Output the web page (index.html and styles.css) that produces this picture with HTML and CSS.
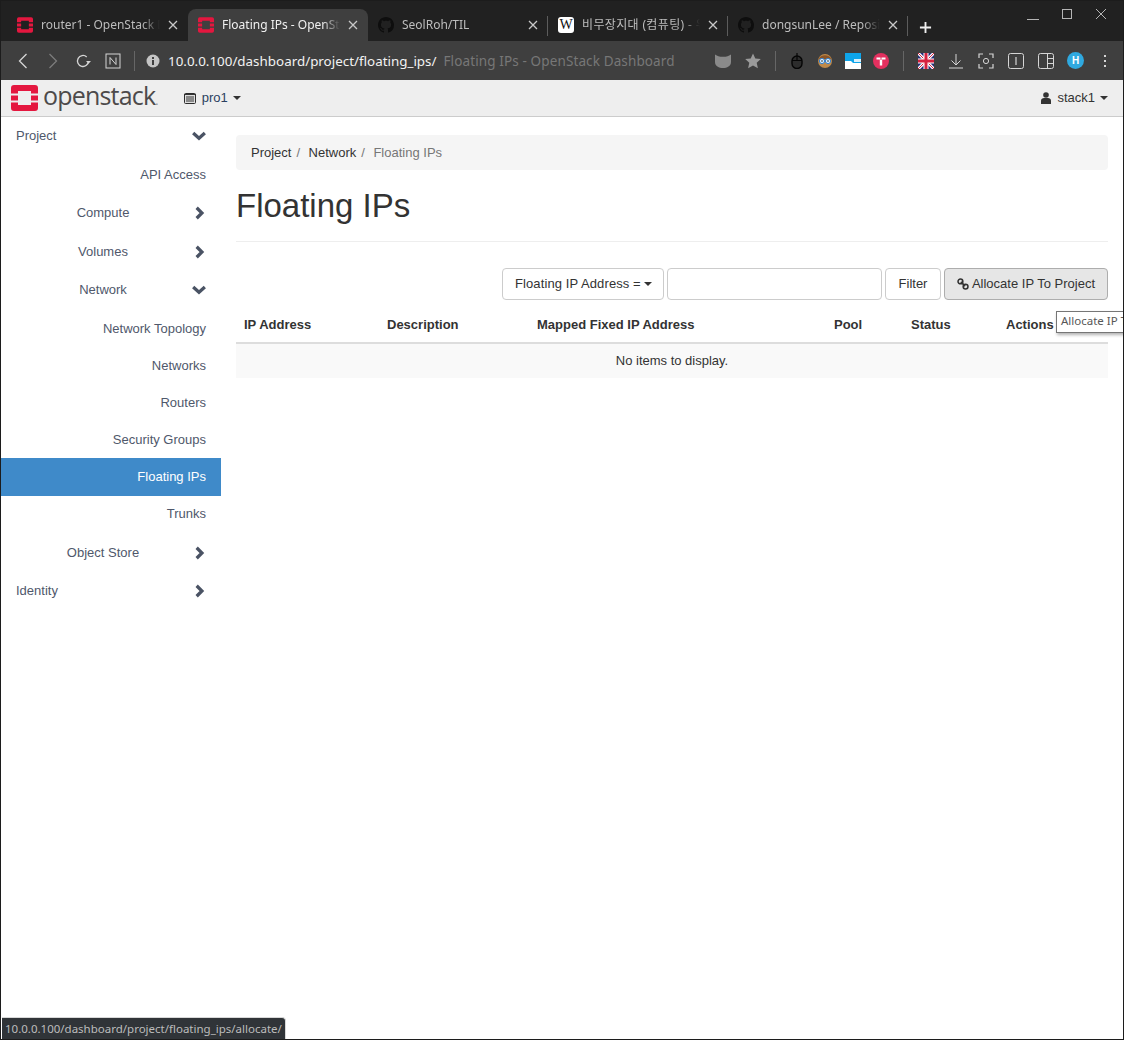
FILE: index.html
```html
<!DOCTYPE html>
<html lang="en">

<head>
    <meta charset="UTF-8" />
    <meta name="viewport" content="width=device-width, initial-scale=1.0" />
    <title>Floating IPs - OpenStack Dashboard</title>
    <link rel="stylesheet" href="styles.css">
</head>

<body>
    <svg class="defs" xmlns="http://www.w3.org/2000/svg">
        <symbol id="os-logo" viewBox="0 0 27 26">
            <path fill="#e4173f" d="M3 0h21a3 3 0 0 1 3 3v5.500h-7V6H7v2.500H0V3a3 3 0 0 1 3-3z" />
            <path fill="#e4173f" d="M0 10.500h7v5H0zM20 10.500h7v5h-7z" />
            <path fill="#e4173f" d="M0 17.500h7V20h13v-2.500h7V23a3 3 0 0 1-3 3H3a3 3 0 0 1-3-3z" />
        </symbol>
        <symbol id="gh-logo" viewBox="0 0 16 16">
            <path fill="#0e0e0e" d="M8 0C3.58 0 0 3.58 0 8c0 3.54 2.29 6.53 5.47 7.59.4.07.55-.17.55-.38 0-.19-.01-.82-.01-1.49-2.01.37-2.53-.49-2.69-.94-.09-.23-.48-.94-.82-1.13-.28-.15-.68-.52-.01-.53.63-.01 1.08.58 1.23.82.72 1.21 1.87.87 2.33.66.07-.52.28-.87.51-1.07-1.78-.2-3.64-.89-3.64-3.95 0-.87.31-1.59.82-2.15-.08-.2-.36-1.02.08-2.12 0 0 .67-.21 2.2.82.64-.18 1.32-.27 2-.27.68 0 1.36.09 2 .27 1.53-1.04 2.2-.82 2.2-.82.44 1.1.16 1.92.08 2.12.51.56.82 1.27.82 2.15 0 3.07-1.87 3.75-3.65 3.95.29.25.54.73.54 1.48 0 1.07-.01 1.93-.01 2.2 0 .21.15.46.55.38A8.013 8.013 0 0 0 16 8c0-4.42-3.58-8-8-8z" />
        </symbol>
        <symbol id="close-x" viewBox="0 0 10 10">
            <path d="M1 1l8 8M9 1l-8 8" stroke="#c8c8c8" stroke-width="1.300" fill="none" />
        </symbol>
        <symbol id="chev-right" viewBox="0 0 12 12">
            <path d="M4 1.500L8.500 6 4 10.500" stroke="#4a5364" stroke-width="2.800" fill="none" />
        </symbol>
        <symbol id="chev-down" viewBox="0 0 12 12">
            <path d="M1 3.500L6 8l5-4.500" stroke="#4a5364" stroke-width="2.800" fill="none" />
        </symbol>
    </svg>

    <div class="window">
        <div class="tabstrip">
            <div class="tab">
                <svg class="favicon"><use href="#os-logo" /></svg>
                <span class="tab-title">router1 - OpenStack Dashboard</span>
                <svg class="tab-close"><use href="#close-x" /></svg>
            </div>
            <div class="tab active">
                <svg class="favicon"><use href="#os-logo" /></svg>
                <span class="tab-title">Floating IPs - OpenStack Dashboard</span>
                <svg class="tab-close"><use href="#close-x" /></svg>
            </div>
            <div class="tab sep">
                <svg class="favicon"><use href="#gh-logo" /></svg>
                <span class="tab-title">SeolRoh/TIL</span>
                <svg class="tab-close"><use href="#close-x" /></svg>
            </div>
            <div class="tab sep">
                <span class="favicon wiki">W</span>
                <span class="tab-title ko">비무장지대 (컴퓨팅) - 위키백과</span>
                <svg class="tab-close"><use href="#close-x" /></svg>
            </div>
            <div class="tab sep">
                <svg class="favicon"><use href="#gh-logo" /></svg>
                <span class="tab-title">dongsunLee / Repositories</span>
                <svg class="tab-close"><use href="#close-x" /></svg>
            </div>
            <svg class="new-tab" viewBox="0 0 14 14"><path d="M7 1v12M1 7h12" stroke="#f0f0f0" stroke-width="2" /></svg>
            <div class="win-controls">
                <svg viewBox="0 0 14 14"><path d="M1 12.500h12" stroke="#b5b5b5" /></svg>
                <svg viewBox="0 0 14 14"><rect x="2.500" y="2.500" width="9" height="9" fill="none" stroke="#b5b5b5" /></svg>
                <svg viewBox="0 0 14 14"><path d="M2 2l10 10M12 2L2 12" stroke="#b5b5b5" /></svg>
            </div>
        </div>

        <div class="toolbar">
            <span class="tool"><svg viewBox="0 0 16 16"><path d="M11.500 1L4.500 8l7 7" stroke="#d6d6d6" stroke-width="1.300" fill="none" /></svg></span>
            <span class="tool"><svg viewBox="0 0 16 16"><path d="M4.500 1l7 7-7 7" stroke="#7c7c7c" stroke-width="1.300" fill="none" /></svg></span>
            <span class="tool"><svg viewBox="0 0 16 16"><path d="M13.500 8a5.500 5.500 0 1 1-1.800-4.100" stroke="#d6d6d6" stroke-width="1.300" fill="none" /><path d="M11 8h5l-2.500 2.800z" fill="#d6d6d6" /></svg></span>
            <span class="tool"><svg viewBox="0 0 16 16"><rect x="1" y="1" width="14" height="14" fill="none" stroke="#d6d6d6" /><path d="M5 11.500v-7l6 7v-7" stroke="#d6d6d6" fill="none" /></svg></span>
            <span class="bar-sep url-sep"></span>
            <svg class="info" viewBox="0 0 14 14"><circle cx="7" cy="7" r="6.500" fill="#c4c4c4" /><path d="M6 6h2v5H6zM6 3h2v2H6z" fill="#3f3f3f" /></svg>
            <span class="url">10.0.0.100/dashboard/project/floating_ips/</span>
            <span class="page-title">Floating IPs - OpenStack Dashboard</span>
            <div class="tool-right">
                <span class="tool"><svg viewBox="0 0 16 16"><path d="M0 1.500c2.500 1.800 4 2.300 8 2.300s5.500-.5 8-2.300V9c0 4-4 6-8 6s-8-2-8-6z" fill="#8a8a8a" /></svg></span>
                <span class="tool"><svg viewBox="0 0 16 16"><path d="M8 .5l2.300 5 5.500.6-4.100 3.700 1.200 5.400L8 12.400l-4.900 2.800 1.200-5.400L.2 6.100l5.500-.6z" fill="#9a9a9a" /></svg></span>
                <span class="bar-sep sep-a"></span>
                <span class="tool ext"><svg viewBox="0 0 16 16"><rect x="3" y="3" width="10" height="12.500" rx="5" fill="#2c2c2c" stroke="#050505" stroke-width="1.400" /><path d="M8 0v7M3 7.500h10" stroke="#050505" stroke-width="1.200" /></svg></span>
                <span class="tool ext"><svg viewBox="0 0 16 16"><circle cx="8" cy="8" r="7" fill="#c08a4a" /><path d="M2 6c1-5 11-5 12 0z" fill="#8a5527" /><circle cx="5" cy="8" r="2.600" fill="#dff0fb" stroke="#2f7fd0" /><circle cx="11" cy="8" r="2.600" fill="#dff0fb" stroke="#2f7fd0" /><circle cx="5" cy="8" r=".8" fill="#222" /><circle cx="11" cy="8" r=".8" fill="#222" /></svg></span>
                <span class="tool ext"><svg viewBox="0 0 16 16"><rect width="16" height="16" fill="#0ea5ea" /><path d="M0 8h6l2 2h8v6H0z" fill="#fff" /><path d="M9 6h7v3H9z" fill="#d8f0fb" /></svg></span>
                <span class="tool ext"><svg viewBox="0 0 16 16"><circle cx="8" cy="8" r="8" fill="#e3305f" /><path d="M3.500 4.500h9v2h-3.300v6H6.800v-6H3.500z" fill="#fff" /><path d="M8 4v3" stroke="#e3305f" /></svg></span>
                <span class="bar-sep sep-b"></span>
                <span class="tool"><svg viewBox="0 0 16 16"><rect width="16" height="16" rx="1.500" fill="#26307a" /><path d="M0 0l16 16M16 0L0 16" stroke="#fff" stroke-width="3" /><path d="M0 0l16 16M16 0L0 16" stroke="#d5213f" /><path d="M8 0v16M0 8h16" stroke="#fff" stroke-width="5" /><path d="M8 0v16M0 8h16" stroke="#d5213f" stroke-width="3" /></svg></span>
                <span class="tool"><svg viewBox="0 0 16 16"><path d="M8 1v10.500M3.500 7.500L8 12l4.500-4.500M1 15h14" stroke="#d6d6d6" fill="none" /></svg></span>
                <span class="tool"><svg viewBox="0 0 16 16"><path d="M1 5V1h4M11 1h4v4M15 11v4h-4M5 15H1v-4" stroke="#d6d6d6" stroke-width="1.200" fill="none" /><circle cx="8" cy="8" r="2.600" stroke="#d6d6d6" fill="none" /></svg></span>
                <span class="tool"><svg viewBox="0 0 16 16"><rect x=".5" y=".5" width="15" height="15" rx="2" stroke="#d6d6d6" fill="none" /><path d="M8 4v8" stroke="#d6d6d6" stroke-width="1.200" /></svg></span>
                <span class="tool"><svg viewBox="0 0 16 16"><rect x=".5" y=".5" width="15" height="15" rx="2" stroke="#d6d6d6" fill="none" /><path d="M9.500 1v14M9.500 5.500h6M9.500 10.500h6" stroke="#d6d6d6" /></svg></span>
                <span class="tool narrow"><span class="avatar">H</span></span>
                <span class="tool narrow"><svg viewBox="0 0 16 16"><path d="M7 2h2v2H7zM7 7h2v2H7zM7 12h2v2H7z" fill="#d6d6d6" /></svg></span>
            </div>
        </div>

        <div class="topnav">
            <svg class="brand-logo"><use href="#os-logo" /></svg>
            <span class="brand-name">openstack<small>.</small></span>
            <div class="project-picker">
                <svg class="project-icon" viewBox="0 0 12 11"><rect x=".5" y=".5" width="11" height="10" rx="1" fill="#dedede" stroke="#2b2b2b" /><path d="M0 1.500h12M2 4h8M2 6h8M2 8h8" stroke="#333" /></svg>
                <span class="project-name">pro1</span>
                <span class="caret"></span>
            </div>
            <div class="user-menu">
                <svg class="user-icon" viewBox="0 0 10 12"><circle cx="5" cy="3" r="2.800" fill="#333" /><path d="M0 12V8.500C0 7 1.500 6 3 6h4c1.500 0 3 1 3 2.500V12z" fill="#333" /></svg>
                <span>stack1</span>
                <span class="caret"></span>
            </div>
        </div>

        <div class="content">
            <nav class="sidebar">
                <div class="nav-row first top">
                    <span class="nav-label">Project</span>
                    <svg class="chev"><use href="#chev-down" /></svg>
                </div>
                <div class="nav-row leaf">API Access</div>
                <div class="nav-row second">
                    <span class="nav-label">Compute</span>
                    <svg class="chev"><use href="#chev-right" /></svg>
                </div>
                <div class="nav-row second">
                    <span class="nav-label">Volumes</span>
                    <svg class="chev"><use href="#chev-right" /></svg>
                </div>
                <div class="nav-row second">
                    <span class="nav-label">Network</span>
                    <svg class="chev"><use href="#chev-down" /></svg>
                </div>
                <div class="subgroup">
                    <div class="nav-row leaf sub">Network Topology</div>
                    <div class="nav-row leaf sub">Networks</div>
                    <div class="nav-row leaf sub">Routers</div>
                    <div class="nav-row leaf sub">Security Groups</div>
                    <div class="nav-row leaf sub current">Floating IPs</div>
                    <div class="nav-row leaf sub last">Trunks</div>
                </div>
                <div class="nav-row second">
                    <span class="nav-label">Object Store</span>
                    <svg class="chev"><use href="#chev-right" /></svg>
                </div>
                <div class="nav-row first">
                    <span class="nav-label">Identity</span>
                    <svg class="chev"><use href="#chev-right" /></svg>
                </div>
            </nav>

            <main class="main">
                <ol class="breadcrumb">
                    <li>Project</li>
                    <li class="slash">/</li>
                    <li>Network</li>
                    <li class="slash">/</li>
                    <li class="here">Floating IPs</li>
                </ol>

                <h1 class="page-header">Floating IPs</h1>

                <div class="actions">
                    <button class="btn btn-select">Floating IP Address = <span class="caret"></span></button>
                    <input class="filter-input" type="text">
                    <button class="btn btn-filter">Filter</button>
                    <button class="btn btn-hover">
                        <svg class="link-icon" viewBox="0 0 14 14"><g fill="none" stroke="#333" stroke-width="1.800"><circle cx="4" cy="4" r="2.800" /><circle cx="10" cy="10" r="2.800" /><path d="M4.500 4.500l5 5" /></g></svg>
                        Allocate IP To Project
                    </button>
                </div>

                <table class="ips">
                    <colgroup>
                        <col class="c-ip"><col class="c-desc"><col class="c-mapped"><col class="c-pool"><col class="c-status"><col>
                    </colgroup>
                    <thead>
                        <tr>
                            <th>IP Address</th>
                            <th>Description</th>
                            <th>Mapped Fixed IP Address</th>
                            <th>Pool</th>
                            <th>Status</th>
                            <th>Actions</th>
                        </tr>
                    </thead>
                    <tbody>
                        <tr>
                            <td colspan="6">No items to display.</td>
                        </tr>
                    </tbody>
                </table>
            </main>
        </div>

        <div class="tooltip">Allocate IP To Project</div>
        <div class="status-bubble">10.0.0.100/dashboard/project/floating_ips/allocate/</div>
    </div>
</body>

</html>
```

FILE: styles.css
```css
* {
    box-sizing: border-box;
}

body {
    margin: 0;
    font-family: "Liberation Sans", Arial, sans-serif;
    font-size: 13px;
    line-height: 20px;
    color: #333;
    background: #fff;
}

.defs {
    display: none;
}

.window {
    position: relative;
    width: 1124px;
    height: 1040px;
    border: 1px solid #1c1c1c;
    overflow: hidden;
    display: flex;
    flex-direction: column;
}

/* browser tabs */
.tabstrip {
    height: 40px;
    padding: 8px 0 0 7px;
    background: #212121;
    display: flex;
    align-items: stretch;
    flex-shrink: 0;
}

.tab {
    position: relative;
    width: 180px;
    padding: 0 10px 0 10px;
    display: flex;
    align-items: center;
    font-family: "Noto Sans", "Noto Sans CJK KR", sans-serif;
    font-size: 12px;
    color: #bdbdbd;
    border-radius: 8px 8px 0 0;
}

.tab:first-child {
    padding-left: 9px;
}

.tab.active {
    background: #3f3f3f;
    color: #f0f0f0;
}

.tab.sep::after {
    content: "";
    position: absolute;
    right: 0;
    top: 7px;
    height: 20px;
    width: 1px;
    background: #5c5c5c;
}

.favicon {
    width: 16px;
    height: 16px;
    flex-shrink: 0;
}

.wiki {
    background: #fff;
    color: #111;
    border-radius: 3px;
    font-family: "Liberation Serif", serif;
    font-size: 14px;
    line-height: 16px;
    text-align: center;
}

.tab-title {
    flex: 1;
    margin-left: 8px;
    white-space: nowrap;
    overflow: hidden;
    -webkit-mask-image: linear-gradient(to right, #000 85%, transparent 100%);
    mask-image: linear-gradient(to right, #000 85%, transparent 100%);
}

.tab-title.ko {
    letter-spacing: .35px;
}

.tab-close {
    width: 10px;
    height: 10px;
    margin-left: 8px;
    flex-shrink: 0;
}

.new-tab {
    width: 13px;
    height: 13px;
    margin: 12px 0 0 11px;
}

.win-controls {
    margin: -2px 15px 0 auto;
    display: flex;
    gap: 20px;
}

.win-controls svg {
    width: 14px;
    height: 14px;
}

/* address bar */
.toolbar {
    height: 39px;
    padding: 0 4px 0 7px;
    background: #3f3f3f;
    display: flex;
    align-items: center;
    flex-shrink: 0;
}

.tool {
    width: 30px;
    display: flex;
    justify-content: center;
    align-items: center;
}

.tool svg {
    width: 16px;
    height: 16px;
}

.tool.ext {
    width: 28px;
}

.tool.narrow {
    width: 29px;
}

.bar-sep {
    width: 1px;
    height: 20px;
    background: #666;
    flex-shrink: 0;
}

.url-sep {
    margin: 0 11px 0 6px;
}

.sep-a {
    margin: 0 7px;
}

.sep-b {
    margin: 0 7px 0 8px;
}

.info {
    width: 14px;
    height: 14px;
    flex-shrink: 0;
}

.url {
    margin-left: 8px;
    font-family: "Noto Sans", sans-serif;
    font-size: 13.400px;
    color: #f2f2f2;
    white-space: nowrap;
}

.page-title {
    margin-left: 7px;
    font-family: "Noto Sans", sans-serif;
    font-size: 13.500px;
    letter-spacing: .12px;
    color: #777;
    white-space: nowrap;
}

.tool-right {
    margin-left: auto;
    display: flex;
    align-items: center;
}

.avatar {
    width: 17px;
    height: 17px;
    border-radius: 50%;
    background: #2fa9e0;
    color: #fff;
    font-size: 10px;
    font-weight: bold;
    line-height: 17px;
    text-align: center;
}

/* openstack top bar */
.topnav {
    height: 37px;
    padding: 0 15px 0 10px;
    background: #eee;
    border-bottom: 1px solid #ccc;
    display: flex;
    align-items: center;
    flex-shrink: 0;
}

.brand-logo {
    width: 27px;
    height: 26px;
    flex-shrink: 0;
}

.brand-name {
    margin-left: 5px;
    font-family: "Open Sans", sans-serif;
    font-size: 25px;
    letter-spacing: -.8px;
    line-height: 30px;
    color: #4d4a4a;
}

.brand-name small {
    font-size: 12px;
    color: #888;
}

.project-picker {
    margin-left: 26px;
    display: flex;
    align-items: center;
}

.project-icon {
    width: 12px;
    height: 11px;
    margin-right: 6px;
}

.project-name {
    color: #2a3f5f;
}

.caret {
    display: inline-block;
    width: 0;
    height: 0;
    margin-left: 5px;
    vertical-align: middle;
    border-top: 4px solid #333;
    border-left: 4px solid transparent;
    border-right: 4px solid transparent;
}

.btn .caret {
    margin-left: -1px;
}

.user-menu {
    margin-left: auto;
    display: flex;
    align-items: center;
}

.user-icon {
    width: 10px;
    height: 12px;
    margin-right: 6px;
}

/* page */
.content {
    flex: 1;
    display: flex;
    min-height: 0;
}

.sidebar {
    width: 220px;
    flex-shrink: 0;
    color: #4f586b;
}

.nav-row {
    height: 38.500px;
    padding: 0 15px;
    display: flex;
    align-items: center;
}

.nav-row.top {
    padding-bottom: 1px;
}

.nav-label {
    flex: 1;
}

.second {
    padding-right: 15px;
}

.second .nav-label {
    padding-right: 2px;
    text-align: center;
}

.chev {
    width: 14px;
    height: 14px;
    flex-shrink: 0;
}

.leaf {
    justify-content: flex-end;
}

.sub {
    height: 37px;
    padding-top: 2px;
}

.sub.current {
    height: 38px;
    padding-top: 1px;
    background: #3f8ac9;
    color: #fff;
}

.sub.last {
    padding-top: 0;
    margin-bottom: 1px;
}

.main {
    flex: 1;
    min-width: 0;
    padding: 18px 15px 0;
}

.breadcrumb {
    height: 35px;
    margin: 0;
    padding: 0 15px;
    list-style: none;
    background: #f5f5f5;
    border-radius: 4px;
    display: flex;
    align-items: center;
}

.slash {
    margin: 0 8.500px 0 5px;
    color: #777;
}

.here {
    color: #777;
}

.page-header {
    margin: 16px 0 0;
    padding-bottom: 15px;
    border-bottom: 1px solid #eee;
    font-size: 33px;
    font-weight: normal;
    line-height: 40px;
}

.actions {
    margin-top: 26px;
    display: flex;
    justify-content: flex-end;
    gap: 3px;
}

.btn {
    height: 32px;
    padding: 0 12px 2px;
    border: 1px solid #ccc;
    border-radius: 4px;
    background: #fff;
    color: #333;
    font-family: inherit;
    font-size: 13px;
}

.btn-select {
    width: 162px;
    letter-spacing: .1px;
    white-space: nowrap;
}

.btn-filter {
    width: 56px;
    padding-left: 0;
    padding-right: 0;
}

.btn-hover {
    background: #e6e6e6;
    border-color: #adadad;
}

.link-icon {
    width: 12px;
    height: 12px;
    vertical-align: -2px;
}

.filter-input {
    width: 215px;
    height: 32px;
    border: 1px solid #ccc;
    border-radius: 4px;
}

.ips {
    width: 100%;
    margin-top: 6px;
    border-collapse: collapse;
    table-layout: fixed;
}

.c-ip {
    width: 143px;
}

.c-desc {
    width: 150px;
}

.c-mapped {
    width: 297px;
}

.c-pool {
    width: 77px;
}

.c-status {
    width: 95px;
}

.ips th {
    padding: 9px 8px 7px;
    text-align: left;
    border-bottom: 2px solid #ddd;
}

.ips td {
    padding: 7px 8px;
    text-align: center;
    background: #f9f9f9;
}

/* things lying over the page */
.tooltip {
    position: absolute;
    left: 1055px;
    top: 310px;
    width: 140px;
    height: 22px;
    padding-left: 4px;
    background: #fff;
    border: 1px solid #767676;
    box-shadow: 1px 2px 3px rgba(0, 0, 0, .3);
    font-family: "Noto Sans", sans-serif;
    font-size: 11.500px;
    line-height: 18px;
    color: #575757;
    white-space: nowrap;
}

.status-bubble {
    position: absolute;
    left: 1px;
    bottom: 0;
    height: 22px;
    padding: 0 3px;
    background: #303438;
    border: 1px solid #d8d8d8;
    border-bottom: 0;
    border-left: 0;
    border-radius: 0 4px 0 0;
    font-family: "Noto Sans", sans-serif;
    font-size: 11.500px;
    line-height: 21px;
    color: #bcbcbc;
    white-space: nowrap;
}
```
